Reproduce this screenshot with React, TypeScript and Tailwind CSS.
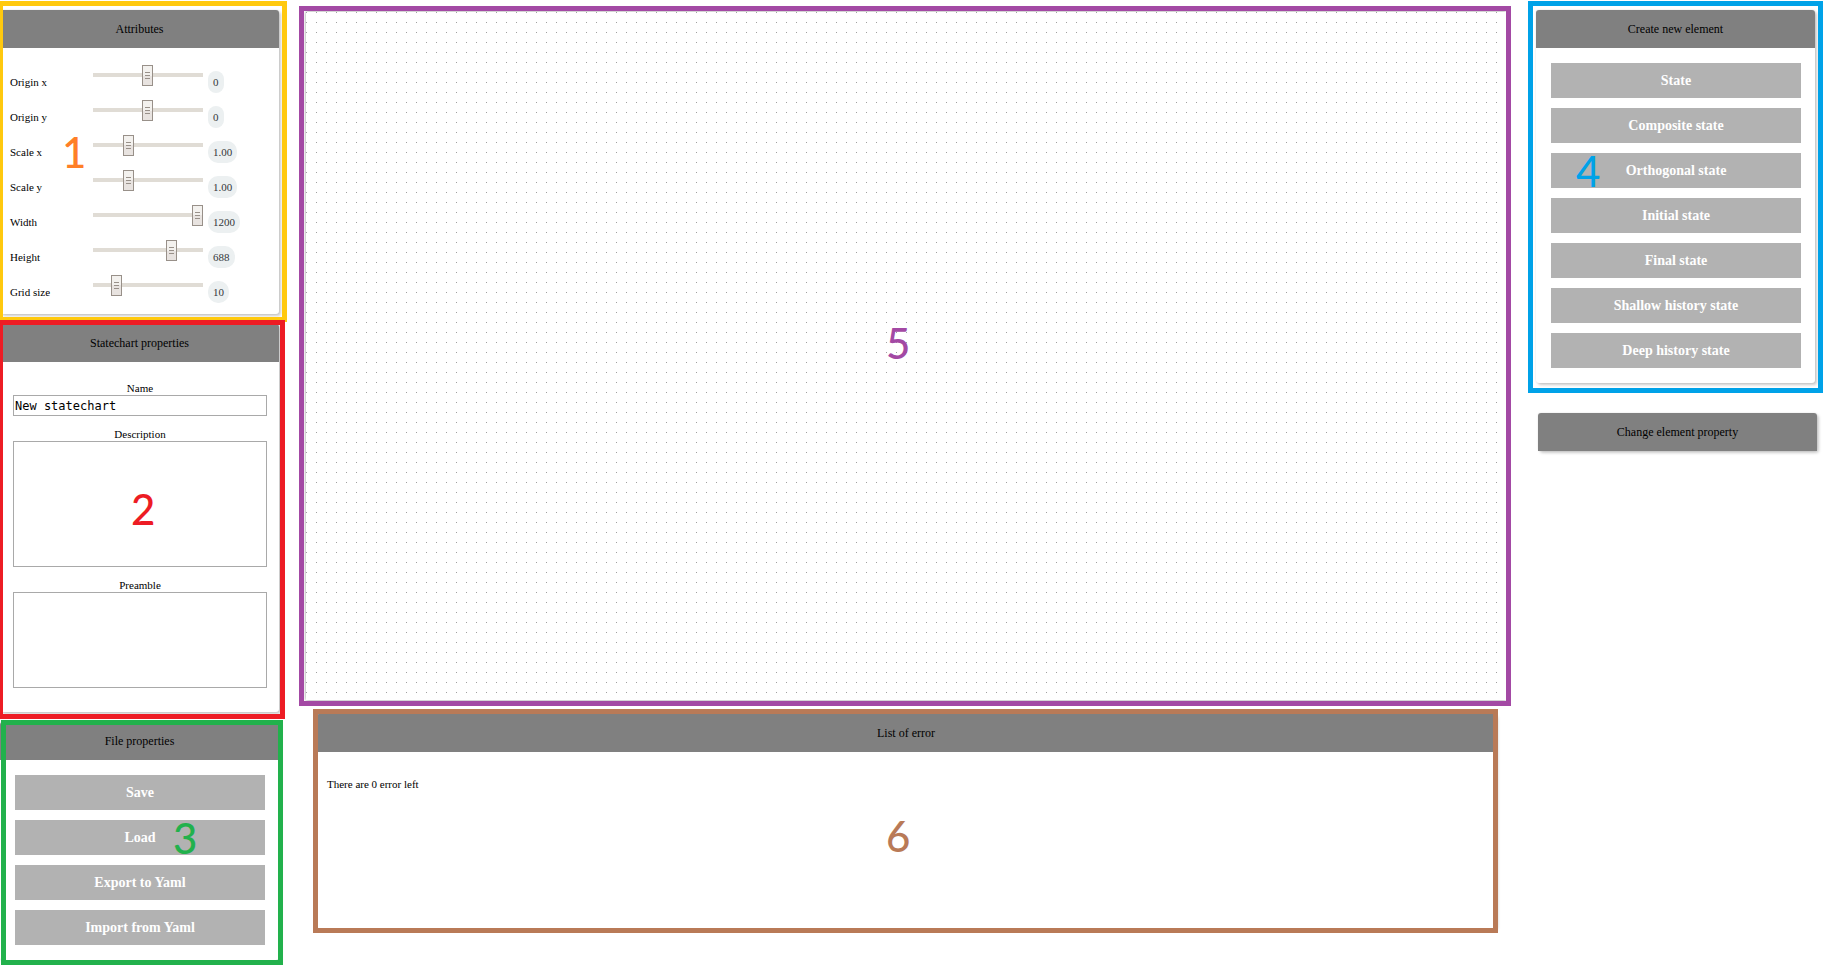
import { useState, type ReactNode } from "react";

const attributes = [
  { label: "Origin x", value: 49.5, min: 0, max: 100, text: "0" },
  { label: "Origin y", value: 49.5, min: 0, max: 100, text: "0" },
  { label: "Scale x", value: 30.5, min: 0, max: 100, text: "1.00" },
  { label: "Scale y", value: 30.5, min: 0, max: 100, text: "1.00" },
  { label: "Width", value: 100, min: 0, max: 100, text: "1200" },
  { label: "Height", value: 74, min: 0, max: 100, text: "688" },
  { label: "Grid size", value: 18.5, min: 0, max: 100, text: "10" },
];

const fileActions = ["Save", "Load", "Export to Yaml", "Import from Yaml"];

const elements = [
  "State",
  "Composite state",
  "Orthogonal state",
  "Initial state",
  "Final state",
  "Shallow history state",
  "Deep history state",
];

function Panel({ title, children, className = "" }: { title: string; children?: ReactNode; className?: string }) {
  return (
    <div className={`rounded-[3px] bg-white shadow-[2px_2px_3px_rgba(0,0,0,0.2),0_0_2px_rgba(0,0,0,0.12)] ${className}`}>
      <h2 className="flex h-[38px] items-center justify-center rounded-t-[3px] bg-[#808080] text-[12px] leading-4">
        {title}
      </h2>
      {children}
    </div>
  );
}

function Marker({ frame, digit, children }: { frame: string; digit: string; children: string }) {
  return (
    <>
      <div aria-hidden="true" className={`pointer-events-none absolute border-5 ${frame}`} />
      <span className={`pointer-events-none absolute font-['Lato',sans-serif] text-[42px] leading-[42px] font-medium ${digit}`}>
        {children}
      </span>
    </>
  );
}

function ButtonList({ labels }: { labels: string[] }) {
  return (
    <div className="flex flex-col gap-[10px] pt-[15px] pr-[14px] pb-[15px] pl-[15px]">
      {labels.map((label) => (
        <button key={label} type="button" className="h-[35px] w-full bg-[#b2b2b2] text-[14px] leading-4 font-bold text-white">
          {label}
        </button>
      ))}
    </div>
  );
}

function Attribute({ label, value, min, max, text }: (typeof attributes)[number]) {
  const [position, setPosition] = useState(value);
  const id = label.toLowerCase().replace(" ", "-");
  return (
    <div className="flex h-[35px] items-start pl-[10px]">
      <label htmlFor={id} className="w-[83px] pt-[10px] text-[11px] leading-4">
        {label}
      </label>
      <input
        id={id}
        type="range"
        min={min}
        max={max}
        step="0.5"
        value={position}
        onChange={(event) => setPosition(Number(event.target.value))}
        className="h-[21px] w-[110px] appearance-none bg-transparent [&::-webkit-slider-runnable-track]:h-1 [&::-webkit-slider-runnable-track]:bg-[#e0dcd5] [&::-webkit-slider-thumb]:-mt-2 [&::-webkit-slider-thumb]:h-[21px] [&::-webkit-slider-thumb]:w-[11px] [&::-webkit-slider-thumb]:appearance-none [&::-webkit-slider-thumb]:border [&::-webkit-slider-thumb]:border-[#989089] [&::-webkit-slider-thumb]:bg-[linear-gradient(#989089,#989089),linear-gradient(#989089,#989089),linear-gradient(#989089,#989089),linear-gradient(#f3f1ee_50%,#e8e3e0_50%)] [&::-webkit-slider-thumb]:bg-[size:5px_1px,5px_1px,5px_1px,100%_100%] [&::-webkit-slider-thumb]:bg-[position:2px_6px,2px_9px,2px_12px,0_0] [&::-webkit-slider-thumb]:bg-no-repeat"
      />
      <output htmlFor={id} className="mt-[7px] ml-[5px] rounded-[10px] bg-[#ecf0f1] px-[5px] text-[11px] leading-[22px] text-[#34373a]">
        {text}
      </output>
    </div>
  );
}

export default function App() {
  return (
    <main className="flex items-start bg-white pt-[10px] pr-[14px] pb-[5px] font-['Liberation_Serif',serif] text-black">
      <aside className="flex w-[279px] shrink-0 flex-col gap-[10px]">
        <section className="relative">
          <Panel title="Attributes" className="pb-[5px]">
            <div className="pt-[16px]">
              {attributes.map((attribute) => (
                <Attribute key={attribute.label} {...attribute} />
              ))}
            </div>
          </Panel>
          <Marker frame="-top-[9px] -right-[8px] -bottom-[8px] -left-[2px] border-[#ffc90e]" digit="top-[121px] left-[62px] text-[#ff7f27]">
            1
          </Marker>
        </section>

        <section className="relative">
          <Panel title="Statechart properties">
            <div className="flex flex-col pt-[20px] pr-[12px] pb-[24px] pl-[13px] text-center text-[11px] leading-[13px]">
              <label htmlFor="name">Name</label>
              <input
                id="name"
                defaultValue="New statechart"
                className="mb-[12px] h-[21px] border border-[#a9a9a9] px-px font-['DejaVu_Sans_Mono',monospace] text-[12px]"
              />
              <label htmlFor="description">Description</label>
              <textarea id="description" className="mb-[12px] h-[126px] resize-none border border-[#a9a9a9]" />
              <label htmlFor="preamble">Preamble</label>
              <textarea id="preamble" className="h-[96px] resize-none border border-[#a9a9a9]" />
            </div>
          </Panel>
          <Marker frame="-top-[4px] -right-[6px] -bottom-[7px] -left-[2px] border-[#ed1c24]" digit="top-[164px] left-[131px] text-[#ed1c24]">
            2
          </Marker>
        </section>

        <section className="relative">
          <Panel title="File properties">
            <ButtonList labels={fileActions} />
          </Panel>
          <Marker frame="-top-[2px] -right-[4px] -bottom-[5px] left-px border-[#22b14c]" digit="top-[95px] left-[173px] text-[#22b14c]">
            3
          </Marker>
        </section>
      </aside>

      <div className="mr-[30px] ml-[27px] flex min-w-0 flex-1 flex-col gap-[14px] pt-[2px]">
        <section className="relative h-[688px] shadow-[0_0_3px_rgba(0,0,0,0.45)]">
          <svg className="block size-full" role="img" aria-label="Statechart canvas">
            <defs>
              <pattern id="grid" width="10" height="10" patternUnits="userSpaceOnUse">
                <rect width="1" height="1" fill="#a0a0a0" />
              </pattern>
            </defs>
            <rect width="100%" height="100%" fill="url(#grid)" />
          </svg>
          <Marker frame="-top-[6px] -right-[5px] -bottom-[6px] -left-[7px] border-[#a349a4]" digit="top-[310px] left-[580px] text-[#a349a4]">
            5
          </Marker>
        </section>

        <section className="relative mx-[10px]">
          <Panel title="List of error" className="min-h-[214px]">
            <p className="px-[11px] pt-[24px] text-[11px] leading-4">There are 0 error left</p>
          </Panel>
          <Marker frame="-top-[5px] -right-[2px] -bottom-[5px] -left-[3px] border-[#b97a57]" digit="top-[101px] left-[570px] text-[#b97a57]">
            6
          </Marker>
        </section>
      </div>

      <aside className="flex w-[279px] shrink-0 flex-col gap-[30px]">
        <section className="relative">
          <Panel title="Create new element">
            <ButtonList labels={elements} />
          </Panel>
          <Marker frame="-top-[9px] -right-[8px] -bottom-[10px] -left-[8px] border-[#00a2e8]" digit="top-[140px] left-[40px] text-[#00a2e8]">
            4
          </Marker>
        </section>
        <div className="-mr-[2px] pl-[2px]">
          <Panel title="Change element property" />
        </div>
      </aside>
    </main>
  );
}
